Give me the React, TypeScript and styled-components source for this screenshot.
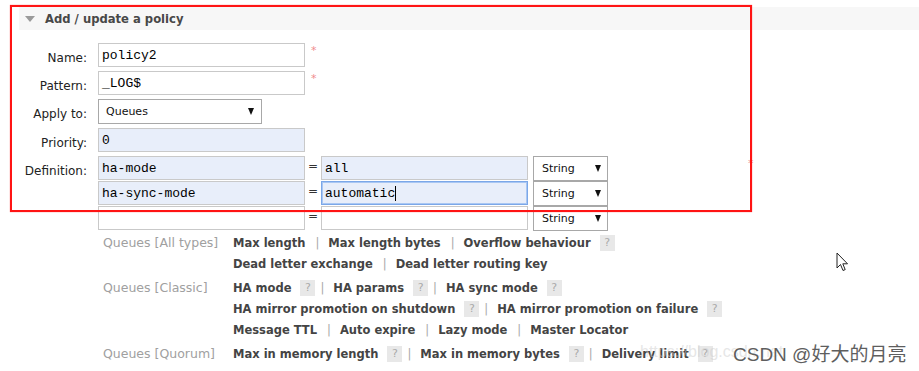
import React from "react";
import styled, { createGlobalStyle } from "styled-components";

const GlobalStyle = createGlobalStyle`
  html, body {
    margin: 0;
    padding: 0;
    background: #fff;
  }
  body {
    font-family: "DejaVu Sans", Verdana, sans-serif;
    overflow: hidden;
  }
`;

const Page = styled.div`
  position: relative;
  box-sizing: border-box;
  width: 919px;
  height: 371px;
  padding: 7px 0 0 19px;
  overflow: hidden;
`;

// red annotation frame drawn over the form
const Frame = styled.div`
  position: absolute;
  left: 10px;
  top: 5px;
  width: 742px;
  height: 207px;
  box-sizing: border-box;
  border: 2px solid #ff1414;
  box-shadow: 0 0 1px rgba(255, 0, 0, 0.6);
  pointer-events: none;
`;

const SectionHeader = styled.div`
  display: flex;
  align-items: center;
  gap: 10px;
  height: 23px;
  padding-left: 6px;
  background: #f7f7f7;
`;

const Arrow = styled.span`
  width: 0;
  height: 0;
  border-left: 5px solid transparent;
  border-right: 5px solid transparent;
  border-top: 6px solid #9a9a9a;
`;

const Title = styled.h2`
  margin: 0;
  font-size: 11.6px;
  font-weight: bold;
  color: #484848;
`;

const Form = styled.div`
  display: grid;
  grid-template-columns: 68px auto;
  column-gap: 11px;
  row-gap: 4px;
  align-items: start;
  margin-top: 13px;
`;

const Label = styled.div`
  box-sizing: border-box;
  height: 24px;
  padding-top: 3px;
  text-align: right;
  font-size: 12px;
  line-height: 24px;
  color: #222;
  white-space: nowrap;
`;

const Row = styled.div`
  display: flex;
  align-items: flex-start;
`;

const Field = styled.div<{ $tint?: boolean; $focus?: boolean }>`
  box-sizing: border-box;
  display: flex;
  align-items: center;
  width: 207px;
  height: 24px;
  padding: 0 3px;
  border: 1px solid ${(p) => (p.$focus ? "#7ba7e8" : "#c9c9c9")};
  box-shadow: ${(p) => (p.$focus ? "inset 0 0 0 1px #a9c7f3" : "none")};
  background: ${(p) => (p.$tint ? "#e8eefa" : "#fff")};
  font-family: "Liberation Mono", "Courier New", monospace;
  font-size: 13px;
  color: #000;
  white-space: pre;
`;

const Caret = styled.span`
  display: inline-block;
  width: 1px;
  height: 15px;
  background: #000;
`;

const Select = styled.div<{ $w: number }>`
  box-sizing: border-box;
  display: flex;
  align-items: center;
  justify-content: space-between;
  width: ${(p) => p.$w}px;
  height: 25px;
  padding: 0 7px 0 7px;
  border: 1px solid #a8a8a8;
  background: #fff;
  font-size: 11px;
  color: #111;
`;

const SelectArrow = styled.span`
  width: 0;
  height: 0;
  border-left: 3.5px solid transparent;
  border-right: 3.5px solid transparent;
  border-top: 7px solid #111;
`;

const Required = styled.span<{ $gap: number }>`
  margin-left: ${(p) => p.$gap}px;
  margin-top: 2px;
  font-size: 11px;
  line-height: 12px;
  color: #f08c8c;
`;

const DefBlock = styled.div`
  display: flex;
  align-items: flex-start;
`;

const DefRows = styled.div`
  display: flex;
  flex-direction: column;
`;

const DefRow = styled.div`
  display: flex;
  align-items: flex-start;
  height: 25px;
`;

const Eq = styled.span`
  width: 16px;
  text-align: center;
  font-size: 12px;
  line-height: 20px;
  color: #333;
`;

const TypeSelect = styled(Select)`
  margin-left: 5px;
  padding: 0 6px 0 8px;
`;

const Help = styled.div`
  margin: 1px 0 0 84px;
`;

const HelpGroup = styled.div`
  display: grid;
  grid-template-columns: 130px auto;
  & + & {
    margin-top: 3px;
  }
`;

const HelpLabel = styled.div`
  font-size: 12.5px;
  line-height: 21px;
  color: #a0a0a0;
  white-space: nowrap;
`;

const HelpLine = styled.div`
  display: flex;
  align-items: center;
  height: 21px;
  white-space: nowrap;
`;

const Link = styled.span`
  font-size: 11.5px;
  font-weight: bold;
  color: #444;
`;

const Sep = styled.span<{ $afterHelp?: boolean }>`
  margin: 0 9px 0 ${(p) => (p.$afterHelp ? 5 : 10)}px;
  font-size: 11.5px;
  color: #a8a8a8;
`;

const HelpMark = styled.span`
  display: inline-flex;
  align-items: center;
  justify-content: center;
  width: 15px;
  height: 16px;
  margin-left: 9px;
  background: #e8e8e8;
  font-size: 11px;
  color: #aaa;
`;

const Watermark = styled.div`
  position: absolute;
  left: 733px;
  top: 339px;
  font-family: "Liberation Sans", "Noto Sans CJK SC", sans-serif;
  font-size: 19px;
  color: #5e5e5e;
  text-shadow: 0 0 2px #fff, 0 0 2px #fff;
  white-space: nowrap;
`;

const FaintUrl = styled.div`
  position: absolute;
  left: 640px;
  top: 343px;
  font-family: "Liberation Sans", sans-serif;
  font-size: 16px;
  color: rgba(205, 205, 205, 0.5);
  white-space: nowrap;
`;

const Pointer = styled.svg`
  position: absolute;
  left: 836px;
  top: 252px;
`;

type Item = { text: string; help?: boolean };

const groups: { label: string; lines: Item[][] }[] = [
  {
    label: "Queues [All types]",
    lines: [
      [{ text: "Max length" }, { text: "Max length bytes" }, { text: "Overflow behaviour", help: true }],
      [{ text: "Dead letter exchange" }, { text: "Dead letter routing key" }],
    ],
  },
  {
    label: "Queues [Classic]",
    lines: [
      [{ text: "HA mode", help: true }, { text: "HA params", help: true }, { text: "HA sync mode", help: true }],
      [
        { text: "HA mirror promotion on shutdown", help: true },
        { text: "HA mirror promotion on failure", help: true },
      ],
      [{ text: "Message TTL" }, { text: "Auto expire" }, { text: "Lazy mode" }, { text: "Master Locator" }],
    ],
  },
  {
    label: "Queues [Quorum]",
    lines: [
      [
        { text: "Max in memory length", help: true },
        { text: "Max in memory bytes", help: true },
        { text: "Delivery limit", help: true },
      ],
    ],
  },
];

const definitions = [
  { key: "ha-mode", value: "all", tint: true },
  { key: "ha-sync-mode", value: "automatic", tint: true, focus: true },
  { key: "", value: "", tint: false },
];

export default function App() {
  return (
    <Page>
      <GlobalStyle />
      <SectionHeader>
        <Arrow />
        <Title>Add / update a policy</Title>
      </SectionHeader>

      <Form>
        <Label>Name:</Label>
        <Row>
          <Field>policy2</Field>
          <Required $gap={6}>*</Required>
        </Row>

        <Label>Pattern:</Label>
        <Row>
          <Field>_LOG$</Field>
          <Required $gap={6}>*</Required>
        </Row>

        <Label>Apply to:</Label>
        <Row>
          <Select $w={164}>
            Queues
            <SelectArrow />
          </Select>
        </Row>

        <Label>Priority:</Label>
        <Row>
          <Field $tint>0</Field>
        </Row>

        <Label>Definition:</Label>
        <DefBlock>
          <DefRows>
            {definitions.map((d, i) => (
              <DefRow key={i}>
                <Field $tint={d.tint}>{d.key}</Field>
                <Eq>=</Eq>
                <Field $tint={d.tint} $focus={d.focus}>
                  {d.value}
                  {d.focus && <Caret />}
                </Field>
                <TypeSelect $w={75}>
                  String
                  <SelectArrow />
                </TypeSelect>
              </DefRow>
            ))}
          </DefRows>
          <Required $gap={140}>*</Required>
        </DefBlock>
      </Form>

      <Help>
        {groups.map((g) => (
          <HelpGroup key={g.label}>
            <HelpLabel>{g.label}</HelpLabel>
            <div>
              {g.lines.map((line, li) => (
                <HelpLine key={li}>
                  {line.map((item, ii) => (
                    <React.Fragment key={item.text}>
                      {ii > 0 && <Sep $afterHelp={line[ii - 1].help}>|</Sep>}
                      <Link>{item.text}</Link>
                      {item.help && <HelpMark>?</HelpMark>}
                    </React.Fragment>
                  ))}
                </HelpLine>
              ))}
            </div>
          </HelpGroup>
        ))}
      </Help>

      <FaintUrl>https://blog.csdn.net</FaintUrl>
      <Watermark>CSDN @好大的月亮</Watermark>

      <Pointer width="13" height="21" viewBox="0 0 13 21">
        <path
          d="M1 1 L1 16 L4.5 12.5 L7 18.5 L9.2 17.6 L6.8 11.8 L11.5 11.8 Z"
          fill="#fff"
          stroke="#222"
          strokeWidth="1"
          strokeLinejoin="round"
        />
      </Pointer>

      <Frame />
    </Page>
  );
}
